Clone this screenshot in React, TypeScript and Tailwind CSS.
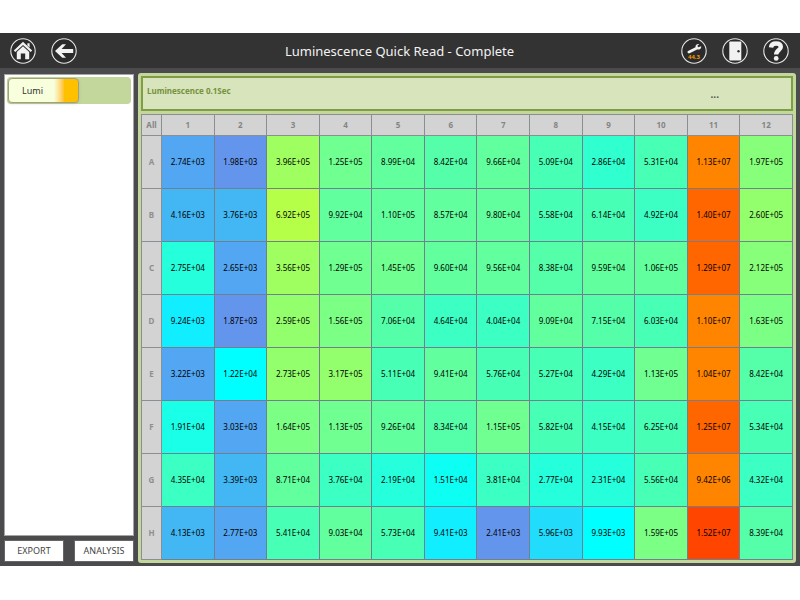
import type { ReactNode } from "react";

const columns = ["1", "2", "3", "4", "5", "6", "7", "8", "9", "10", "11", "12"];

const plate: { row: string; wells: string[] }[] = [
  { row: "A", wells: ["2.74E+03", "1.98E+03", "3.96E+05", "1.25E+05", "8.99E+04", "8.42E+04", "9.66E+04", "5.09E+04", "2.86E+04", "5.31E+04", "1.13E+07", "1.97E+05"] },
  { row: "B", wells: ["4.16E+03", "3.76E+03", "6.92E+05", "9.92E+04", "1.10E+05", "8.57E+04", "9.80E+04", "5.58E+04", "6.14E+04", "4.92E+04", "1.40E+07", "2.60E+05"] },
  { row: "C", wells: ["2.75E+04", "2.65E+03", "3.56E+05", "1.29E+05", "1.45E+05", "9.60E+04", "9.56E+04", "8.38E+04", "9.59E+04", "1.06E+05", "1.29E+07", "2.12E+05"] },
  { row: "D", wells: ["9.24E+03", "1.87E+03", "2.59E+05", "1.56E+05", "7.06E+04", "4.64E+04", "4.04E+04", "9.09E+04", "7.15E+04", "6.03E+04", "1.10E+07", "1.63E+05"] },
  { row: "E", wells: ["3.22E+03", "1.22E+04", "2.73E+05", "3.17E+05", "5.11E+04", "9.41E+04", "5.76E+04", "5.27E+04", "4.29E+04", "1.13E+05", "1.04E+07", "8.42E+04"] },
  { row: "F", wells: ["1.91E+04", "3.03E+03", "1.64E+05", "1.13E+05", "9.26E+04", "8.34E+04", "1.15E+05", "5.82E+04", "4.15E+04", "6.25E+04", "1.25E+07", "5.34E+04"] },
  { row: "G", wells: ["4.35E+04", "3.39E+03", "8.71E+04", "3.76E+04", "2.19E+04", "1.51E+04", "3.81E+04", "2.77E+04", "2.31E+04", "5.56E+04", "9.42E+06", "4.32E+04"] },
  { row: "H", wells: ["4.13E+03", "2.77E+03", "5.41E+04", "9.03E+04", "5.73E+04", "9.41E+03", "2.41E+03", "5.96E+03", "9.93E+03", "1.59E+05", "1.52E+07", "8.39E+04"] },
];

// Upper limit of each heat-map band and its fill.
const bands: [number, string][] = [
  [2.5e3, "bg-[#6495ed]"],
  [3.3e3, "bg-[#53a6f1]"],
  [5e3, "bg-[#42b7f4]"],
  [7e3, "bg-[#22dcfb]"],
  [9.5e3, "bg-[#11eeff]"],
  [1.3e4, "bg-[#00ffff]"],
  [1.6e4, "bg-[#0dfff4]"],
  [2e4, "bg-[#1affe8]"],
  [2.8e4, "bg-[#26ffdc]"],
  [3e4, "bg-[#30ffd0]"],
  [5e4, "bg-[#3cffc3]"],
  [7e4, "bg-[#48ffb6]"],
  [8.5e4, "bg-[#55ffaa]"],
  [1.11e5, "bg-[#62ff9e]"],
  [1.5e5, "bg-[#70ff91]"],
  [1.7e5, "bg-[#7cff85]"],
  [2.3e5, "bg-[#88ff7a]"],
  [3.3e5, "bg-[#94ff6c]"],
  [5e5, "bg-[#a0ff60]"],
  [9e5, "bg-[#b5ff48]"],
  [1.2e7, "bg-[#ff8400]"],
  [1.45e7, "bg-[#ff6600]"],
  [Infinity, "bg-[#ff4500]"],
];

function fillFor(value: string) {
  const n = Number(value);
  return bands.find(([limit]) => n < limit)![1];
}

function RoundButton({ label, children }: { label: string; children: ReactNode }) {
  return (
    <button type="button" aria-label={label} className="size-[26px] shrink-0">
      <svg viewBox="0 0 26 26" className="size-full" fill="#f2f2f2">
        <circle cx="13" cy="13" r="12.2" fill="#2b2b2b" stroke="#e6e6e6" strokeWidth="1.1" />
        {children}
      </svg>
    </button>
  );
}

function Header() {
  return (
    <header className="grid h-[35px] grid-cols-[1fr_auto_1fr] items-center bg-[#333333] pr-[11px] pl-[10px]">
      <nav className="flex gap-[15px]">
        <RoundButton label="Home">
          <path d="M13 3.8 22.2 12.4 20.7 14 13 6.9 5.3 14 3.8 12.4Z" />
          <path d="M13 8.3 19.2 14V21.3H15.2V15.6H10.8V21.3H6.8V14Z" />
          <path d="M17.4 5.2H19.6V9.6L17.4 7.6Z" />
        </RoundButton>
        <RoundButton label="Back">
          <path d="M4 13 11.3 6.3H15L10.6 11.1H22.2V14.9H10.6L15 19.7H11.3Z" />
        </RoundButton>
      </nav>
      <h1 className="text-[13px] leading-5 text-[#f2f2f2]">Luminescence Quick Read - Complete</h1>
      <nav className="flex justify-end gap-[15px]">
        <RoundButton label="Service, 44.3">
          <path d="M7 13.1 14.5 9.2C14.2 7 16 5.4 18.3 6.1L16.4 7.8 17.2 9.3 20.2 8.2C20.5 10.7 18.2 12.1 16.1 11.4L8.6 15.3C6.8 15.9 5.7 14 7 13.1Z" />
          <text x="13" y="20.7" textAnchor="middle" fontSize="6" fontWeight="700" fill="#f59a00">44.3</text>
        </RoundButton>
        <RoundButton label="Door">
          <rect x="7.3" y="3.4" width="12" height="19" rx="1" />
          <circle cx="16.5" cy="13.2" r="1.2" fill="#333" />
        </RoundButton>
        <RoundButton label="Help">
          <path d="M8 9.4C8.3 6.6 10 5.5 13 5.5C16 5.5 17.8 6.7 17.8 9C17.8 12.2 13.2 12 13.2 16.6" fill="none" stroke="#f2f2f2" strokeWidth="4.4" />
          <circle cx="13.2" cy="20.4" r="2.4" />
        </RoundButton>
      </nav>
    </header>
  );
}

function Sidebar() {
  return (
    <aside className="flex w-[130px] shrink-0 flex-col gap-1 pt-[6px] pb-1">
      <div className="flex-1 border border-[#a5a5a5] bg-white p-[2px]">
        <div className="rounded-sm bg-[#c3d69b] p-px">
          <button
            type="button"
            className="flex h-[25px] w-[71px] items-center rounded-sm border border-[#a3a17c] bg-linear-to-r from-[#f7ffdc] from-65% to-[#ffc000] to-80% pl-[13px] text-[9px] text-[#333333] shadow-sm"
          >
            Lumi
          </button>
        </div>
      </div>
      <div className="flex justify-between">
        <button type="button" className="h-[22px] w-[60px] border border-[#666666] bg-white text-[9px] text-[#444444]">EXPORT</button>
        <button type="button" className="h-[22px] w-[60px] border border-[#666666] bg-white text-[9px] text-[#444444]">ANALYSIS</button>
      </div>
    </aside>
  );
}

function PlateTable() {
  return (
    <table className="w-full flex-1 table-fixed border-collapse text-center text-[8px] leading-3">
      <colgroup>
        <col className="w-5" />
        {columns.map((c) => (
          <col key={c} />
        ))}
      </colgroup>
      <thead>
        <tr className="h-[21px] bg-[#d3d3d3] text-[#858585]">
          <th scope="col" className="border border-[#8a8f94] font-bold">All</th>
          {columns.map((c) => (
            <th key={c} scope="col" className="border border-[#8a8f94] font-bold">{c}</th>
          ))}
        </tr>
      </thead>
      <tbody>
        {plate.map(({ row, wells }) => (
          <tr key={row} className="h-[53px]">
            <th scope="row" className="border border-[#8a8f94] bg-[#d3d3d3] font-bold text-[#8f8f8f]">{row}</th>
            {wells.map((value, i) => (
              <td key={columns[i]} className={`border border-[#708090] text-black ${fillFor(value)}`}>{value}</td>
            ))}
          </tr>
        ))}
      </tbody>
    </table>
  );
}

export default function App() {
  return (
    <div className="min-h-screen bg-white py-[33px] font-['Noto_Sans','Open_Sans',sans-serif]">
      <div className="bg-[#4b4b4d]">
        <Header />
        <div className="flex gap-1 pr-1 pl-1">
          <Sidebar />
          <main className="mt-[5px] mb-[3px] flex min-w-0 flex-1 flex-col gap-[3px] rounded-[3px] bg-[#c3d69b] p-[3px]">
            <section className="flex h-[35px] items-start justify-between border-2 border-[#7f9d45] bg-[#d8e4bc] pt-[7px] pr-[72px] pl-1 text-[8px] leading-3">
              <h2 className="font-bold text-[#76923c]">Luminescence 0.1Sec</h2>
              <button type="button" aria-label="More" className="mt-[3px] text-[10px] font-bold text-[#555555]">...</button>
            </section>
            <PlateTable />
          </main>
        </div>
      </div>
    </div>
  );
}
